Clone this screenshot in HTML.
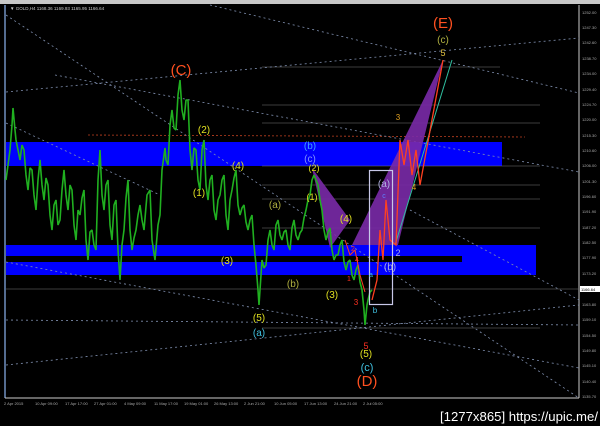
<!DOCTYPE html>
<html><head><style>
body{margin:0;width:600px;height:426px;background:#000;overflow:hidden;font-family:"Liberation Sans",sans-serif}
svg{position:absolute;left:0;top:0}
</style></head><body>
<svg width="600" height="426" viewBox="0 0 600 426" xmlns="http://www.w3.org/2000/svg">
<rect width="600" height="426" fill="#000"/>
<rect x="0" y="0" width="600" height="4" fill="#c8c8c8"/>
<line x1="5" y1="5" x2="5" y2="398" stroke="#7090c0" stroke-width="1.5"/>
<line x1="5" y1="398" x2="579" y2="398" stroke="#ccc"/>
<line x1="579" y1="5" x2="579" y2="398" stroke="#ccc"/>
<rect x="6" y="142" width="496" height="24" fill="#0000ff"/>
<rect x="6" y="245" width="530" height="30" fill="#0000ff"/>
<rect x="6" y="256" width="456" height="6" fill="#000"/>
<g stroke="#777" stroke-width="0.6">
<line x1="262" y1="67" x2="500" y2="67"/><line x1="262" y1="105" x2="540" y2="105"/>
<line x1="262" y1="123" x2="540" y2="123"/><line x1="262" y1="166" x2="540" y2="166"/>
<line x1="262" y1="185" x2="540" y2="185"/><line x1="262" y1="199" x2="540" y2="199"/>
<line x1="262" y1="228" x2="540" y2="228"/><line x1="6" y1="289" x2="579" y2="289"/>
<line x1="262" y1="328" x2="540" y2="328"/>
</g>
<line x1="88" y1="135" x2="525" y2="137" stroke="#c04020" stroke-width="0.8" stroke-dasharray="2,2"/>
<g stroke="#8090b0" stroke-width="0.8" stroke-dasharray="2,3" fill="none">
<line x1="6" y1="15" x2="579" y2="398"/>
<line x1="210" y1="5" x2="579" y2="93"/>
<line x1="55" y1="75" x2="579" y2="172"/>
<line x1="6" y1="92" x2="579" y2="38"/>
<line x1="6" y1="123" x2="160" y2="195"/>
<line x1="6" y1="262" x2="579" y2="368"/>
<line x1="6" y1="365" x2="579" y2="305"/>
<line x1="6" y1="320" x2="579" y2="325"/>
<line x1="410" y1="210" x2="579" y2="300"/>
</g>
<polygon points="312,168 330,248 350,220" fill="#7a2aa8" opacity="0.9"/>
<polygon points="352,245 443,60 415,175 398,245" fill="#7a2aa8" opacity="0.9"/>
<line x1="395" y1="245" x2="452" y2="60" stroke="#30c0a0" stroke-width="1"/>
<polyline fill="none" stroke="#20b020" stroke-width="1.6" stroke-linejoin="bevel" points="6,180 8,165 10,150 12,125 13,108 15,130 16,140 18,150 20,160 22,145 24,150 26,175 28,190 30,168 32,170 34,195 36,210 38,180 40,160 42,185 44,200 46,178 48,185 50,215 52,230 54,205 56,200 58,225 60,220 62,190 64,170 66,195 68,210 70,185 72,190 74,225 76,240 78,210 80,215 82,198 84,190 86,240 88,260 90,232 92,230 94,245 96,250 98,180 100,150 102,195 104,210 106,185 108,180 110,225 112,240 114,205 116,200 118,250 120,280 122,245 124,230 126,198 128,180 130,230 132,250 134,238 136,230 138,215 140,205 142,220 144,230 147,195 150,190 152,240 155,260 158,225 160,215 162,170 165,148 166,160 168,165 170,125 172,110 174,128 176,130 178,95 180,80 182,110 184,120 186,100 188,100 190,150 192,170 194,148 196,150 198,180 200,190 202,150 204,140 206,185 208,200 210,180 212,175 214,210 216,220 218,200 220,195 222,180 224,175 226,215 228,230 230,200 232,190 234,178 236,170 238,205 240,215 242,208 244,205 246,222 248,230 250,220 252,215 254,245 256,265 258,290 259,305 261,275 262,260 264,268 266,265 268,240 270,230 272,245 274,250 276,225 278,220 280,235 282,240 284,232 286,230 288,245 290,250 292,228 294,220 296,235 298,240 300,233 302,230 304,218 306,210 308,200 310,195 312,180 314,175 316,180 318,185 320,200 322,210 324,230 326,240 328,232 330,228 332,250 334,260 336,255 338,255 340,245 342,240 344,262 346,270 348,262 350,260 352,275 354,280 356,270 358,265 360,282 362,290 364,310 365,325 367,305 368,300 370,292 372,290"/>
<polyline fill="none" stroke="#ff4020" stroke-width="1.3" points="372,300 377,280 380,230 383,260 386,200 390,240 396,245 400,140 404,165 408,140 412,175 416,150 420,185 443,60"/>
<polyline fill="none" stroke="#ff4020" stroke-width="1" points="345,240 350,255 355,250 360,275 365,292"/>
<rect x="369.5" y="170.5" width="23" height="134" fill="none" stroke="#c8c8e8" stroke-width="1.2"/>
<text x="10" y="10" font-size="4.5" fill="#ccc">▼ GOLD,H4  1168.36 1169.93 1165.95 1166.64</text>
<g font-family="Liberation Sans,sans-serif" text-anchor="middle">
<text x="181" y="75" font-size="15" fill="#ff5020">(C)</text>
<text x="443" y="28" font-size="15" fill="#ff5020">(E)</text>
<text x="367" y="386" font-size="15" fill="#ff5020">(D)</text>
<text x="443" y="43" font-size="10" fill="#b0b040">(c)</text>
<text x="443" y="56" font-size="9" fill="#e0c040">5</text>
<text x="204" y="133" font-size="10" fill="#e0e020">(2)</text>
<text x="199" y="196" font-size="10" fill="#e0e020">(1)</text>
<text x="238" y="169" font-size="10" fill="#e0e020">(4)</text>
<text x="227" y="264" font-size="10" fill="#e0e020">(3)</text>
<text x="259" y="321" font-size="10" fill="#e0e020">(5)</text>
<text x="259" y="336" font-size="10" fill="#40c0e0">(a)</text>
<text x="275" y="208" font-size="10" fill="#b0b040">(a)</text>
<text x="293" y="287" font-size="10" fill="#b0b040">(b)</text>
<text x="310" y="149" font-size="10" fill="#40a0ff">(b)</text>
<text x="310" y="162" font-size="10" fill="#8090ff">(c)</text>
<text x="314" y="171" font-size="9" fill="#e0e020">(2)</text>
<text x="312" y="200" font-size="9" fill="#e0e020">(1)</text>
<text x="346" y="222" font-size="10" fill="#e0e020">(4)</text>
<text x="332" y="298" font-size="10" fill="#e0e020">(3)</text>
<text x="384" y="187" font-size="10" fill="#b0b0e0">(a)</text>
<text x="390" y="270" font-size="10" fill="#b0b0e0">(b)</text>
<text x="366" y="357" font-size="10" fill="#e0e020">(5)</text>
<text x="367" y="371" font-size="11" fill="#40c0e0">(c)</text>
<text x="366" y="349" font-size="9" fill="#ff3020">5</text>
<text x="356" y="305" font-size="8" fill="#ff3020">3</text>
<text x="349" y="281" font-size="7" fill="#ff3020">1</text>
<text x="357" y="262" font-size="7" fill="#ff3020">4</text>
<text x="353" y="251" font-size="7" fill="#ff3020">2</text>
<text x="375" y="313" font-size="8" fill="#40c0e0">b</text>
<text x="371" y="277" font-size="7" fill="#40c0e0">a</text>
<text x="384" y="198" font-size="7" fill="#6080ff">c</text>
<text x="398" y="120" font-size="8" fill="#e0a020">3</text>
<text x="398" y="256" font-size="9" fill="#b0b0e0">2</text>
<text x="414" y="190" font-size="8" fill="#e0a020">4</text>
</g>
<g font-size="4" fill="#aaa">
<text x="582" y="14">1252.00</text><text x="582" y="29">1247.30</text><text x="582" y="44">1242.60</text>
<text x="582" y="60">1238.70</text><text x="582" y="75">1234.00</text><text x="582" y="91">1229.40</text>
<text x="582" y="106">1224.70</text><text x="582" y="121">1220.00</text><text x="582" y="137">1215.30</text>
<text x="582" y="152">1210.60</text><text x="582" y="167">1206.00</text><text x="582" y="183">1201.30</text>
<text x="582" y="198">1196.60</text><text x="582" y="213">1191.90</text><text x="582" y="229">1187.20</text>
<text x="582" y="244">1182.50</text><text x="582" y="259">1177.90</text><text x="582" y="275">1173.20</text>
<text x="582" y="306">1163.80</text><text x="582" y="321">1159.10</text><text x="582" y="337">1154.50</text>
<text x="582" y="352">1149.80</text><text x="582" y="367">1145.10</text><text x="582" y="383">1140.40</text>
<text x="582" y="398">1135.70</text>
</g>
<rect x="580" y="286" width="20" height="6" fill="#fff"/>
<text x="581" y="291" font-size="4" fill="#000">1166.64</text>
<g font-size="4" fill="#aaa">
<text x="4" y="405">2 Apr 2015</text><text x="35" y="405">10 Apr 09:00</text><text x="65" y="405">17 Apr 17:00</text>
<text x="94" y="405">27 Apr 01:00</text><text x="124" y="405">4 May 09:00</text><text x="154" y="405">11 May 17:00</text>
<text x="184" y="405">19 May 01:00</text><text x="214" y="405">26 May 13:00</text><text x="244" y="405">2 Jun 21:00</text>
<text x="274" y="405">10 Jun 05:00</text><text x="304" y="405">17 Jun 13:00</text><text x="334" y="405">24 Jun 21:00</text>
<text x="363" y="405">2 Jul 05:00</text>
</g>
<text x="598" y="421" font-size="13" fill="#fff" text-anchor="end" textLength="158" lengthAdjust="spacingAndGlyphs" font-family="Liberation Sans,sans-serif">[1277x865] https://upic.me/</text>
</svg>
</body></html>
